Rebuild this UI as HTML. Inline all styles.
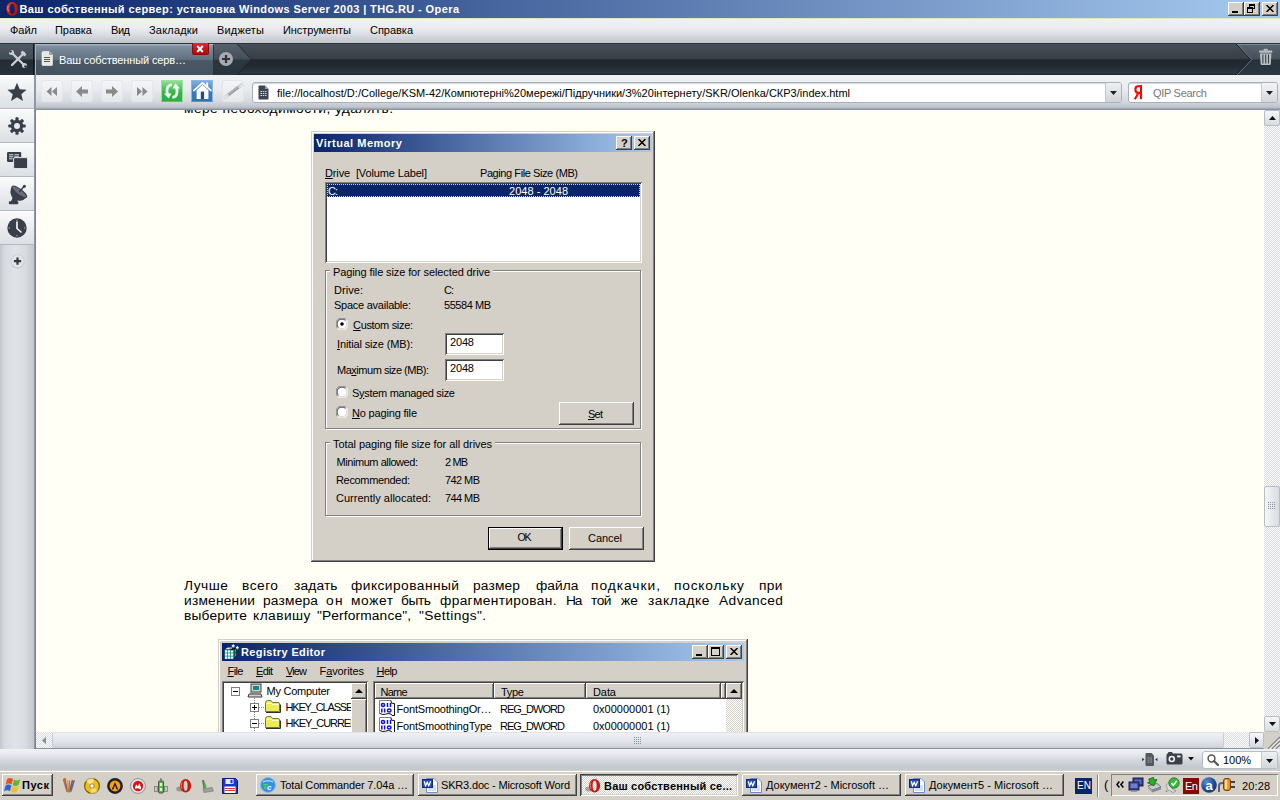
<!DOCTYPE html>
<html><head><meta charset="utf-8"><title>Opera</title><style>
html,body{margin:0;padding:0;}
body{width:1280px;height:800px;overflow:hidden;position:relative;background:#d4d0c8;font-family:"Liberation Sans", sans-serif;font-size:11px;}
div,span.t,svg{position:absolute;box-sizing:border-box;}
span.t{white-space:pre;}
</style></head><body>
<div style="left:0px;top:0px;width:1280px;height:18px;background:linear-gradient(90deg,#0a246a 0%,#a6caf0 100%);"></div>
<svg style="left:4px;top:1px;" width="16" height="16" viewBox="0 0 16 16"><defs><linearGradient id="og" x1="0" y1="0" x2="1" y2="1"><stop offset="0" stop-color="#f05040"/><stop offset=".35" stop-color="#d41c14"/><stop offset="1" stop-color="#a80c08"/></linearGradient></defs><ellipse cx="3.6" cy="10.6" rx="3" ry="2" fill="#081848" opacity=".45"/><path fill-rule="evenodd" fill="url(#og)" d="M2.3 7.9 A5.9 6.8 0 1 0 14.1 7.9 A5.9 6.8 0 1 0 2.3 7.9 Z M6 7.9 A2.3 5.2 0 1 1 10.6 7.9 A2.3 5.2 0 1 1 6 7.9 Z"/><path d="M4.2 4.6 Q3.2 7.5 4.4 10.6" stroke="#ffb0a0" stroke-width=".9" fill="none" opacity=".8"/></svg>
<span class="t" style="left:19.5px;top:2px;font-size:11px;line-height:14px;font-weight:bold;color:#fff;letter-spacing:0.401px;">Ваш собственный сервер: установка Windows Server 2003 | THG.RU - Opera</span>
<div style="left:1228px;top:2px;width:16px;height:14px;background:#d4d0c8;box-shadow:inset -1px -1px 0 #404040,inset 1px 1px 0 #fff,inset -2px -2px 0 #808080,inset 2px 2px 0 #d4d0c8;"><div style="left:4px;top:9px;width:6px;height:2px;background:#000"></div></div>
<div style="left:1244px;top:2px;width:16px;height:14px;background:#d4d0c8;box-shadow:inset -1px -1px 0 #404040,inset 1px 1px 0 #fff,inset -2px -2px 0 #808080,inset 2px 2px 0 #d4d0c8;"><div style="left:5px;top:2px;width:6px;height:5px;border:1px solid #000;border-top-width:2px"></div><div style="left:3px;top:5px;width:6px;height:6px;border:1px solid #000;border-top-width:2px;background:#d4d0c8"></div></div>
<div style="left:1262px;top:2px;width:16px;height:14px;background:#d4d0c8;box-shadow:inset -1px -1px 0 #404040,inset 1px 1px 0 #fff,inset -2px -2px 0 #808080,inset 2px 2px 0 #d4d0c8;"></div>
<svg style="left:1266px;top:5px;" width="8" height="7" viewBox="0 0 8 7"><path d="M.5 0L7.5 7M7.5 0L.5 7" stroke="#000" stroke-width="1.5"/></svg>
<div style="left:0px;top:18px;width:1280px;height:25px;background:linear-gradient(#f0f1f3 0,#ecedf0 35%,#dadde2 65%,#c8ccd3 88%,#c2c6ce 100%);border-top:1px solid #e8e0d0;"></div>
<span class="t" style="left:10px;top:23px;font-size:11px;line-height:14px;color:#000;letter-spacing:-0.016px;">Файл</span>
<span class="t" style="left:55px;top:23px;font-size:11px;line-height:14px;color:#000;letter-spacing:-0.034px;">Правка</span>
<span class="t" style="left:111px;top:23px;font-size:11px;line-height:14px;color:#000;letter-spacing:-0.453px;">Вид</span>
<span class="t" style="left:149px;top:23px;font-size:11px;line-height:14px;color:#000;letter-spacing:0.199px;">Закладки</span>
<span class="t" style="left:217px;top:23px;font-size:11px;line-height:14px;color:#000;letter-spacing:0.172px;">Виджеты</span>
<span class="t" style="left:283px;top:23px;font-size:11px;line-height:14px;color:#000;letter-spacing:-0.059px;">Инструменты</span>
<span class="t" style="left:370px;top:23px;font-size:11px;line-height:14px;color:#000;letter-spacing:-0.026px;">Справка</span>
<div style="left:0px;top:43px;width:1280px;height:32px;background:linear-gradient(#464e58 0,#373f49 46%,#1f262d 52%,#222a31 70%,#2d3840 96%,#161c20 100%);border-top:1px solid #2e343c;"></div>
<div style="left:0px;top:44px;width:34px;height:31px;background:linear-gradient(#505a64 0,#424c56 47%,#242d35 53%,#28313a 100%);border-right:1px solid #11161a;"></div>
<svg style="left:8px;top:49px;" width="20" height="20" viewBox="0 0 20 20"><g stroke="#ccd0d4" stroke-width="2.3" stroke-linecap="round"><path d="M4 4 L16 16"/><path d="M16 4 L4 16"/></g><circle cx="3.5" cy="3.5" r="2.5" fill="#ccd0d4"/><circle cx="16.5" cy="16.5" r="2.5" fill="#ccd0d4"/><circle cx="2.5" cy="2.5" r="1.3" fill="#3a444e"/><circle cx="17.5" cy="17.5" r="1.3" fill="#2a333b"/><path d="M14.5 1.5 L18.5 5.5 L16.5 7.5 L12.5 3.5 Z" fill="#ccd0d4"/></svg>
<div style="left:35px;top:44px;width:179px;height:31px;background:linear-gradient(#8e9dad 0,#7a8a9b 10%,#62717f 48%,#4a5966 52%,#43525e 100%);border-left:1px solid #a4b0bc;border-right:1px solid #2a333b;border-top:1px solid #a8b4c0;"></div>
<svg style="left:41px;top:51px;" width="12" height="15" viewBox="0 0 12 15"><path d="M1 1.5 Q1 .5 2 .5 L8 .5 L11.5 4 L11.5 13.5 Q11.5 14.5 10.5 14.5 L2 14.5 Q1 14.5 1 13.5 Z" fill="#e8e8e4" stroke="#f8f8f8" stroke-width=".6"/><path d="M8 .5 L8 4 L11.5 4 Z" fill="#a0a4a0"/><path d="M3 6.5H9M3 8.5H9M3 10.5H9" stroke="#555" stroke-width="1"/></svg>
<span class="t" style="left:59px;top:53px;font-size:11px;line-height:14px;color:#fff;letter-spacing:-0.123px;">Ваш собственный серв…</span>
<div style="left:192px;top:43px;width:17px;height:12px;background:linear-gradient(#e42828,#b00808);border:1px solid #8c0c0c;border-top:0;border-radius:0 0 2px 2px;"></div>
<svg style="left:196px;top:45px;" width="8" height="8" viewBox="0 0 8 8"><path d="M1.2 1L6.8 7M6.8 1L1.2 7" stroke="#fff" stroke-width="2"/></svg>
<svg style="left:214px;top:44px;" width="40" height="31" viewBox="0 0 40 31"><defs><linearGradient id="nt" x1="0" y1="0" x2="0" y2="1"><stop offset="0" stop-color="#58626c"/><stop offset=".48" stop-color="#444e58"/><stop offset=".52" stop-color="#2c363e"/><stop offset="1" stop-color="#2a343c"/></linearGradient></defs><path d="M0 0 L23 0 L37.5 15.5 L23 31 L0 31 Z" fill="url(#nt)"/><path d="M23 0 L37.5 15.5 L23 31" fill="none" stroke="#161c21" stroke-width="1" opacity=".7"/><circle cx="12" cy="15" r="7" fill="#a6aaae"/><path d="M12 11V19M8 15H16" stroke="#2c343a" stroke-width="2.2"/></svg>
<svg style="left:1234px;top:44px;" width="46" height="31" viewBox="0 0 46 31"><defs><linearGradient id="tr" x1="0" y1="0" x2="0" y2="1"><stop offset="0" stop-color="#586470"/><stop offset=".48" stop-color="#44505c"/><stop offset=".52" stop-color="#28323a"/><stop offset="1" stop-color="#2c3640"/></linearGradient></defs><path d="M3 0 L46 0 L46 31 L3 31 L17.8 15.5 Z" fill="url(#tr)"/><path d="M2 0 L16.8 15.5 L2 31" fill="none" stroke="#14191d" stroke-width="1"/><path d="M3 0 L17.8 15.5 L3 31" fill="none" stroke="#6a7682" stroke-width="1"/><path d="M3 .5 H46" stroke="#7c8894" stroke-width="1"/><g fill="#babec2"><rect x="25" y="6.6" width="13.4" height="2.2" rx="1"/><rect x="29.6" y="4.8" width="4.2" height="2" rx=".8"/><path d="M26 9.4 H37.4 L36.8 20 Q36.7 21 35.7 21 H27.7 Q26.7 21 26.6 20 Z"/></g><path d="M28.9 10.6V19.4M31.7 10.6V19.4M34.5 10.6V19.4" stroke="#3a444c" stroke-width="1.1"/></svg>
<div style="left:34px;top:75px;width:1246px;height:35px;background:linear-gradient(#f1f2f4 0,#e9ebee 40%,#d6d9df 75%,#bec4cc 92%,#7e8894 100%);border-left:2px solid #8e98a4;"></div>
<div style="left:41px;top:80px;width:22px;height:22px;background:linear-gradient(#f4f5f7,#e6e8ec);border:1px solid #e4e6ea;border-radius:3px;"></div>
<div style="left:71px;top:80px;width:22px;height:22px;background:linear-gradient(#f4f5f7,#e6e8ec);border:1px solid #e4e6ea;border-radius:3px;"></div>
<div style="left:101px;top:80px;width:22px;height:22px;background:linear-gradient(#f4f5f7,#e6e8ec);border:1px solid #e4e6ea;border-radius:3px;"></div>
<div style="left:131px;top:80px;width:22px;height:22px;background:linear-gradient(#f4f5f7,#e6e8ec);border:1px solid #e4e6ea;border-radius:3px;"></div>
<svg style="left:41px;top:80px;" width="22" height="23" viewBox="0 0 22 23"><path d="M10.5 7 L10.5 16 L5.5 11.5 Z M16 7 L16 16 L11 11.5 Z" fill="#8a8a8a"/></svg>
<svg style="left:71px;top:80px;" width="22" height="23" viewBox="0 0 22 23"><path d="M11 6 L11 9.5 L17 9.5 L17 13.5 L11 13.5 L11 17 L5 11.5 Z" fill="#8a8a8a"/></svg>
<svg style="left:101px;top:80px;" width="22" height="23" viewBox="0 0 22 23"><path d="M11 6 L11 9.5 L5 9.5 L5 13.5 L11 13.5 L11 17 L17 11.5 Z" fill="#8a8a8a"/></svg>
<svg style="left:131px;top:80px;" width="22" height="23" viewBox="0 0 22 23"><path d="M6 7 L6 16 L11 11.5 Z M11.5 7 L11.5 16 L16.5 11.5 Z" fill="#8a8a8a"/></svg>
<div style="left:161px;top:80px;width:22px;height:22px;background:linear-gradient(#92de98 0,#5cc86a 30%,#38b048 60%,#30ac42 100%);border:1px solid #9ce0a0;border-bottom-color:#58c066;"></div>
<svg style="left:161px;top:80px;" width="22" height="22" viewBox="0 0 22 22"><g fill="none" stroke="#f4fff4" stroke-width="2.8" opacity=".95"><path d="M10.8 4.6 Q4.2 6 6.6 14.6"/><path d="M11.4 17.6 Q18 16 15.4 7.4"/></g><path d="M3 13.6 L10.6 13.6 L7.6 18.6 Z" fill="#f4fff4"/><path d="M11.4 8.4 L19 8.4 L14.4 3.2 Z" fill="#f4fff4"/></svg>
<div style="left:191px;top:80px;width:22px;height:22px;background:linear-gradient(#82acde 0,#5c90d0 35%,#3a76c2 60%,#3470bc 100%);border:1px solid #8cb4e2;border-bottom-color:#5c8ccc;"></div>
<svg style="left:191px;top:80px;" width="22" height="22" viewBox="0 0 22 22"><path d="M5.6 10.2 L11.5 5 L17.4 10.2 L17.4 19 L5.6 19 Z" fill="#fff"/><path d="M2.4 10.8 L11.5 2.8 L20.4 10.8" fill="none" stroke="#fff" stroke-width="1.7"/><rect x="15.2" y="2.6" width="1.9" height="5" fill="#fff"/><rect x="9.8" y="11.6" width="3.3" height="7.4" fill="#2444a4"/></svg>
<div style="left:222px;top:80px;width:22px;height:22px;background:linear-gradient(#f4f5f7,#e6e8ec);border:1px solid #e4e6ea;border-radius:3px;"></div>
<svg style="left:221px;top:80px;" width="23" height="23" viewBox="0 0 23 23"><path d="M4.2 17.2 L20.6 4.8" stroke="#9a9ea4" stroke-width="3" stroke-linecap="round"/><path d="M4.2 17.2 L6.4 15.5 M18.6 6.3 L20.6 4.8" stroke="#e4e6e8" stroke-width="3" stroke-linecap="round"/><path d="M5 16 L20 4.6" stroke="#c4c8cc" stroke-width=".8"/></svg>
<div style="left:252px;top:82px;width:870px;height:21px;background:#fff;border:1px solid #a8b0ba;border-radius:3px;box-shadow:inset 0 1px 1px #d0d4d8;"></div>
<svg style="left:258px;top:85px;" width="11" height="15" viewBox="0 0 11 15"><path d="M.5 1.5 Q.5 .5 1.5 .5 L7 .5 L10.5 4 L10.5 13.5 Q10.5 14.5 9.5 14.5 L1.5 14.5 Q.5 14.5 .5 13.5 Z" fill="#3e4652"/><path d="M7 .5 L7 4 L10.5 4 Z" fill="#999"/><path d="M2.5 6.5H8.5M2.5 8.5H8.5M2.5 10.5H8.5" stroke="#ddd" stroke-width="1" stroke-dasharray="1.5 .8"/></svg>
<span class="t" style="left:277px;top:86px;font-size:11px;line-height:14px;color:#000;letter-spacing:0.01px;">file://localhost/D:/College/KSM-42/Компютерні%20мережі/Підручники/З%20інтернету/SKR/Olenka/СКР3/index.html</span>
<div style="left:1105px;top:83px;width:16px;height:19px;background:linear-gradient(#eef0f2,#d0d4d9);border-left:1px solid #c4c9ce;border-radius:0 2px 2px 0;"></div>
<svg style="left:1110px;top:91px;" width="7" height="4" viewBox="0 0 7 4"><path d="M0 0 H7 L3.5 4 Z" fill="#222"/></svg>
<div style="left:1128px;top:82px;width:150px;height:21px;background:#fff;border:1px solid #a8b0ba;border-radius:3px;box-shadow:inset 0 1px 1px #d0d4d8;"></div>
<svg style="left:1133px;top:85px;" width="10" height="15" viewBox="0 0 10 15"><g fill="none" stroke="#f00" stroke-width="2.1"><path d="M8 0 V14.2"/><path d="M8 1.2 H5.2 Q2.4 1.2 2.4 4.4 Q2.4 7.8 5.2 7.8 H8"/><path d="M5.6 7.8 L1.8 14.2"/></g></svg>
<span class="t" style="left:1153px;top:86px;font-size:11px;line-height:14px;color:#777;letter-spacing:-0.297px;">QIP Search</span>
<div style="left:1261px;top:83px;width:16px;height:19px;background:linear-gradient(#f4f5f6,#d4d8dc);border-left:1px solid #c8ccd0;border-radius:0 2px 2px 0;"></div>
<svg style="left:1266px;top:91px;" width="7" height="4" viewBox="0 0 7 4"><path d="M0 0 H7 L3.5 4 Z" fill="#222"/></svg>
<div style="left:0px;top:75px;width:34px;height:674px;background:linear-gradient(90deg,#c2c6ce 0,#d6d9de 12%,#e0e3e7 45%,#d8dbe0 75%,#c2c8d0 100%);"></div>
<div style="left:0px;top:75px;width:34px;height:34px;background:linear-gradient(#fafafb 0,#eceef1 45%,#dcdfe4 100%);border-bottom:1px solid #b4bac4;border-top:1px solid #fff;"></div>
<div style="left:0px;top:109px;width:34px;height:34px;background:linear-gradient(#fafafb 0,#eceef1 45%,#dcdfe4 100%);border-bottom:1px solid #b4bac4;border-top:1px solid #fff;"></div>
<div style="left:0px;top:143px;width:34px;height:34px;background:linear-gradient(#fafafb 0,#eceef1 45%,#dcdfe4 100%);border-bottom:1px solid #b4bac4;border-top:1px solid #fff;"></div>
<div style="left:0px;top:177px;width:34px;height:34px;background:linear-gradient(#fafafb 0,#eceef1 45%,#dcdfe4 100%);border-bottom:1px solid #b4bac4;border-top:1px solid #fff;"></div>
<div style="left:0px;top:211px;width:34px;height:34px;background:linear-gradient(#fafafb 0,#eceef1 45%,#dcdfe4 100%);border-bottom:1px solid #b4bac4;border-top:1px solid #fff;"></div>
<svg style="left:7px;top:82px;" width="20" height="20" viewBox="0 0 20 20"><path d="M10 .8 L12.7 7.2 L19.6 7.7 L14.3 12.2 L16 19 L10 15.3 L4 19 L5.7 12.2 L.4 7.7 L7.3 7.2 Z" fill="#3a3e48"/></svg>
<svg style="left:8px;top:117px;" width="18" height="18" viewBox="0 0 18 18"><rect x="7.4" y="0.3" width="3.2" height="17.4" rx=".8" transform="rotate(0 9 9)" fill="#3a3e48"/><rect x="7.4" y="0.3" width="3.2" height="17.4" rx=".8" transform="rotate(45 9 9)" fill="#3a3e48"/><rect x="7.4" y="0.3" width="3.2" height="17.4" rx=".8" transform="rotate(90 9 9)" fill="#3a3e48"/><rect x="7.4" y="0.3" width="3.2" height="17.4" rx=".8" transform="rotate(135 9 9)" fill="#3a3e48"/><circle cx="9" cy="9" r="6.2" fill="#3a3e48"/><circle cx="9" cy="9" r="3" fill="#e8eaee"/></svg>
<svg style="left:6px;top:151px;" width="22" height="18" viewBox="0 0 22 18"><rect x="1" y="1" width="14.2" height="10" rx="1.2" fill="#3a3e48"/><rect x="7.6" y="6.6" width="14" height="11" rx="1.4" fill="#3a3e48" stroke="#e4e6ea" stroke-width="1"/><path d="M3 3.8H7.4M8.4 3.8H13M3 5.8H7.4M8.4 5.8H13M3 7.8H6.6" stroke="#dcdee2" stroke-width="1"/></svg>
<svg style="left:7px;top:183px;" width="21" height="22" viewBox="0 0 21 22"><path d="M5.2 3.6 A8.8 8.8 0 0 0 19.4 14.2 Z" fill="#3a3e48"/><ellipse cx="12.3" cy="8.9" rx="8.9" ry="2.7" transform="rotate(36.7 12.3 8.9)" fill="#6a6e78" stroke="#3a3e48" stroke-width="1"/><path d="M12.3 8.9 L17 3.6" stroke="#3a3e48" stroke-width="1.5"/><circle cx="17.4" cy="3.2" r="1.5" fill="#3a3e48"/><path d="M6.6 12.5 L3.8 19 L10 19 L11 16.4 Z" fill="#3a3e48"/><rect x="1.8" y="18.2" width="9.6" height="3" rx="1.2" fill="#3a3e48"/></svg>
<svg style="left:7px;top:218px;" width="20" height="20" viewBox="0 0 20 20"><circle cx="10" cy="10" r="9.7" fill="#3a3e48"/><path d="M10 4 L10 10.5 L14 14" fill="none" stroke="#fff" stroke-width="1.6" stroke-linecap="round"/><g fill="#aab"><circle cx="10" cy="2.2" r=".7"/><circle cx="10" cy="17.8" r=".7"/><circle cx="2.2" cy="10" r=".7"/><circle cx="17.8" cy="10" r=".7"/></g></svg>
<svg style="left:10px;top:254px;" width="15" height="15" viewBox="0 0 15 15"><circle cx="7.5" cy="7.8" r="6.8" fill="#b4b8c0"/><circle cx="7.5" cy="7.2" r="6.6" fill="#e2e4e8" stroke="#c8ccd2" stroke-width=".8"/><path d="M7.5 3.6V10.8M3.9 7.2H11.1" stroke="#34383f" stroke-width="2.2"/></svg>
<div style="left:34px;top:110px;width:2px;height:639px;background:linear-gradient(90deg,#98a2ae,#6e7a88);"></div>
<div style="left:36px;top:110px;width:1228px;height:622px;background:#fffff6;overflow:hidden;"></div>
<div style="left:36px;top:110px;width:1229px;height:8px;overflow:hidden;">
<span class="t" style="left:147.5px;top:-8px;font-size:12.5px;line-height:15px;color:#000;letter-spacing:0.413px;transform:scaleX(1.1);transform-origin:0 0;">мере необходимости, удалять.</span>
</div>
<div style="left:311px;top:131px;width:344px;height:431px;background:#d4d0c8;box-shadow:inset -1px -1px 0 #404040,inset 1px 1px 0 #d4d0c8,inset -2px -2px 0 #808080,inset 2px 2px 0 #fff;"></div>
<div style="left:314px;top:134px;width:338px;height:18px;background:linear-gradient(90deg,#0a246a 0%,#a6caf0 100%);"></div>
<span class="t" style="left:316px;top:136px;font-size:11px;line-height:14px;font-weight:bold;color:#fff;letter-spacing:0.517px;">Virtual Memory</span>
<div style="left:616px;top:136px;width:16px;height:14px;background:#d4d0c8;box-shadow:inset -1px -1px 0 #404040,inset 1px 1px 0 #fff,inset -2px -2px 0 #808080,inset 2px 2px 0 #d4d0c8;"></div>
<span class="t" style="left:621px;top:136px;font-size:11px;line-height:14px;font-weight:bold;color:#000;">?</span>
<div style="left:634px;top:136px;width:16px;height:14px;background:#d4d0c8;box-shadow:inset -1px -1px 0 #404040,inset 1px 1px 0 #fff,inset -2px -2px 0 #808080,inset 2px 2px 0 #d4d0c8;"></div>
<svg style="left:638px;top:139px;" width="8" height="7" viewBox="0 0 8 7"><path d="M.5 0L7.5 7M7.5 0L.5 7" stroke="#000" stroke-width="1.5"/></svg>
<span class="t" style="left:325px;top:166px;font-size:11px;line-height:14px;color:#000;letter-spacing:-0.129px;"><u>D</u>rive  [Volume Label]</span>
<span class="t" style="left:480px;top:166px;font-size:11px;line-height:14px;color:#000;letter-spacing:-0.419px;">Paging File Size (MB)</span>
<div style="left:325px;top:182px;width:317px;height:81px;background:#fff;box-shadow:inset 1px 1px 0 #808080,inset -1px -1px 0 #fff,inset 2px 2px 0 #404040,inset -2px -2px 0 #d4d0c8;"></div>
<div style="left:327px;top:184px;width:313px;height:13px;background:#0a246a;outline:1px dotted #e8d8a0;outline-offset:-1px;"></div>
<span class="t" style="left:328px;top:184px;font-size:11px;line-height:14px;color:#fff;letter-spacing:-1px;">C:</span>
<span class="t" style="left:509px;top:184px;font-size:11px;line-height:14px;color:#fff;letter-spacing:0.028px;">2048 - 2048</span>
<div style="left:325px;top:270px;width:316px;height:159px;border:1px solid #808080;box-shadow:inset 1px 1px 0 #fff,1px 1px 0 #fff;"></div>
<div style="left:330px;top:268px;width:163px;height:6px;background:#d4d0c8;"></div>
<span class="t" style="left:333px;top:265px;font-size:11px;line-height:14px;color:#000;letter-spacing:-0.112px;">Paging file size for selected drive</span>
<span class="t" style="left:334px;top:283px;font-size:11px;line-height:14px;color:#000;letter-spacing:0.053px;">Drive:</span>
<span class="t" style="left:444px;top:283px;font-size:11px;line-height:14px;color:#000;letter-spacing:-1px;">C:</span>
<span class="t" style="left:334px;top:298px;font-size:11px;line-height:14px;color:#000;letter-spacing:-0.249px;">Space available:</span>
<span class="t" style="left:444px;top:298px;font-size:11px;line-height:14px;color:#000;letter-spacing:-0.451px;">55584 MB</span>
<svg style="left:336px;top:318px;" width="12" height="12" viewBox="0 0 12 12"><circle cx="6" cy="6" r="5.5" fill="#fff"/><path d="M1.6 10.4 A6 6 0 0 1 10.4 1.6" fill="none" stroke="#808080" stroke-width="1"/><path d="M2.5 9.5 A4.8 4.8 0 0 1 9.5 2.5" fill="none" stroke="#404040" stroke-width="1"/><path d="M10.4 1.6 A6 6 0 0 1 1.6 10.4" fill="none" stroke="#fff" stroke-width="1"/><path d="M9.5 2.5 A4.8 4.8 0 0 1 2.5 9.5" fill="none" stroke="#d4d0c8" stroke-width="1"/><circle cx="6" cy="6" r="1.8" fill="#000"/></svg>
<span class="t" style="left:353px;top:318px;font-size:11px;line-height:14px;color:#000;letter-spacing:-0.327px;"><u>C</u>ustom size:</span>
<span class="t" style="left:337px;top:337px;font-size:11px;line-height:14px;color:#000;letter-spacing:-0.132px;"><u>I</u>nitial size (MB):</span>
<div style="left:445px;top:333px;width:59px;height:22px;background:#fff;box-shadow:inset 1px 1px 0 #808080,inset -1px -1px 0 #fff,inset 2px 2px 0 #404040,inset -2px -2px 0 #d4d0c8;"></div>
<span class="t" style="left:450px;top:335px;font-size:11px;line-height:14px;color:#000;letter-spacing:-0.161px;">2048</span>
<span class="t" style="left:337px;top:363px;font-size:11px;line-height:14px;color:#000;letter-spacing:-0.484px;">Ma<u>x</u>imum size (MB):</span>
<div style="left:445px;top:359px;width:59px;height:22px;background:#fff;box-shadow:inset 1px 1px 0 #808080,inset -1px -1px 0 #fff,inset 2px 2px 0 #404040,inset -2px -2px 0 #d4d0c8;"></div>
<span class="t" style="left:450px;top:361px;font-size:11px;line-height:14px;color:#000;letter-spacing:-0.161px;">2048</span>
<svg style="left:336px;top:386px;" width="12" height="12" viewBox="0 0 12 12"><circle cx="6" cy="6" r="5.5" fill="#fff"/><path d="M1.6 10.4 A6 6 0 0 1 10.4 1.6" fill="none" stroke="#808080" stroke-width="1"/><path d="M2.5 9.5 A4.8 4.8 0 0 1 9.5 2.5" fill="none" stroke="#404040" stroke-width="1"/><path d="M10.4 1.6 A6 6 0 0 1 1.6 10.4" fill="none" stroke="#fff" stroke-width="1"/><path d="M9.5 2.5 A4.8 4.8 0 0 1 2.5 9.5" fill="none" stroke="#d4d0c8" stroke-width="1"/></svg>
<span class="t" style="left:352px;top:386px;font-size:11px;line-height:14px;color:#000;letter-spacing:-0.291px;">S<u>y</u>stem managed size</span>
<svg style="left:336px;top:406px;" width="12" height="12" viewBox="0 0 12 12"><circle cx="6" cy="6" r="5.5" fill="#fff"/><path d="M1.6 10.4 A6 6 0 0 1 10.4 1.6" fill="none" stroke="#808080" stroke-width="1"/><path d="M2.5 9.5 A4.8 4.8 0 0 1 9.5 2.5" fill="none" stroke="#404040" stroke-width="1"/><path d="M10.4 1.6 A6 6 0 0 1 1.6 10.4" fill="none" stroke="#fff" stroke-width="1"/><path d="M9.5 2.5 A4.8 4.8 0 0 1 2.5 9.5" fill="none" stroke="#d4d0c8" stroke-width="1"/></svg>
<span class="t" style="left:352px;top:406px;font-size:11px;line-height:14px;color:#000;letter-spacing:-0.175px;"><u>N</u>o paging file</span>
<div style="left:559px;top:402px;width:75px;height:23px;background:#d4d0c8;box-shadow:inset -1px -1px 0 #404040,inset 1px 1px 0 #fff,inset -2px -2px 0 #808080,inset 2px 2px 0 #d4d0c8;"></div>
<span class="t" style="left:588px;top:407px;font-size:11px;line-height:14px;color:#000;letter-spacing:-0.766px;"><u>S</u>et</span>
<div style="left:325px;top:442px;width:316px;height:74px;border:1px solid #808080;box-shadow:inset 1px 1px 0 #fff,1px 1px 0 #fff;"></div>
<div style="left:330px;top:440px;width:165px;height:6px;background:#d4d0c8;"></div>
<span class="t" style="left:333px;top:437px;font-size:11px;line-height:14px;color:#000;letter-spacing:-0.067px;">Total paging file size for all drives</span>
<span class="t" style="left:336.5px;top:455px;font-size:11px;line-height:14px;color:#000;letter-spacing:-0.435px;">Minimum allowed:</span>
<span class="t" style="left:445px;top:455px;font-size:11px;line-height:14px;color:#000;letter-spacing:-0.896px;">2 MB</span>
<span class="t" style="left:336px;top:473px;font-size:11px;line-height:14px;color:#000;letter-spacing:-0.332px;">Recommended:</span>
<span class="t" style="left:445px;top:473px;font-size:11px;line-height:14px;color:#000;letter-spacing:-0.584px;">742 MB</span>
<span class="t" style="left:336px;top:491px;font-size:11px;line-height:14px;color:#000;letter-spacing:0.012px;">Currently allocated:</span>
<span class="t" style="left:445px;top:491px;font-size:11px;line-height:14px;color:#000;letter-spacing:-0.584px;">744 MB</span>
<div style="left:488px;top:527px;width:75px;height:23px;background:#000;"></div>
<div style="left:489px;top:528px;width:73px;height:21px;background:#d4d0c8;box-shadow:inset -1px -1px 0 #404040,inset 1px 1px 0 #fff,inset -2px -2px 0 #808080,inset 2px 2px 0 #d4d0c8;"></div>
<span class="t" style="left:517.5px;top:531px;font-size:10.5px;line-height:13.5px;color:#000;letter-spacing:-1.172px;">OK</span>
<div style="left:569px;top:527px;width:75px;height:23px;background:#d4d0c8;box-shadow:inset -1px -1px 0 #404040,inset 1px 1px 0 #fff,inset -2px -2px 0 #808080,inset 2px 2px 0 #d4d0c8;"></div>
<span class="t" style="left:588px;top:531px;font-size:11px;line-height:14px;color:#000;letter-spacing:-0.05px;">Cancel</span>
<span class="t" style="left:183.5px;top:579px;font-size:12.5px;line-height:15px;color:#000;letter-spacing:0.477px;transform:scaleX(1.1);transform-origin:0 0;">Лучше</span>
<span class="t" style="left:242px;top:579px;font-size:12.5px;line-height:15px;color:#000;letter-spacing:0.444px;transform:scaleX(1.1);transform-origin:0 0;">всего</span>
<span class="t" style="left:293.5px;top:579px;font-size:12.5px;line-height:15px;color:#000;letter-spacing:0.128px;transform:scaleX(1.1);transform-origin:0 0;">задать</span>
<span class="t" style="left:351px;top:579px;font-size:12.5px;line-height:15px;color:#000;letter-spacing:0.411px;transform:scaleX(1.1);transform-origin:0 0;">фиксированный</span>
<span class="t" style="left:473px;top:579px;font-size:12.5px;line-height:15px;color:#000;letter-spacing:0.145px;transform:scaleX(1.1);transform-origin:0 0;">размер</span>
<span class="t" style="left:535.5px;top:579px;font-size:12.5px;line-height:15px;color:#000;letter-spacing:0.042px;transform:scaleX(1.1);transform-origin:0 0;">файла</span>
<span class="t" style="left:591px;top:579px;font-size:12.5px;line-height:15px;color:#000;letter-spacing:0.89px;transform:scaleX(1.1);transform-origin:0 0;">подкачки,</span>
<span class="t" style="left:674px;top:579px;font-size:12.5px;line-height:15px;color:#000;letter-spacing:0.712px;transform:scaleX(1.1);transform-origin:0 0;">поскольку</span>
<span class="t" style="left:759px;top:579px;font-size:12.5px;line-height:15px;color:#000;letter-spacing:0.33px;transform:scaleX(1.1);transform-origin:0 0;">при</span>
<span class="t" style="left:183.5px;top:594px;font-size:12.5px;line-height:15px;color:#000;letter-spacing:0.195px;transform:scaleX(1.1);transform-origin:0 0;">изменении</span>
<span class="t" style="left:262.5px;top:594px;font-size:12.5px;line-height:15px;color:#000;letter-spacing:0.174px;transform:scaleX(1.1);transform-origin:0 0;">размера</span>
<span class="t" style="left:326px;top:594px;font-size:12.5px;line-height:15px;color:#000;letter-spacing:1.141px;transform:scaleX(1.1);transform-origin:0 0;">он</span>
<span class="t" style="left:350.5px;top:594px;font-size:12.5px;line-height:15px;color:#000;letter-spacing:0.538px;transform:scaleX(1.1);transform-origin:0 0;">может</span>
<span class="t" style="left:400.5px;top:594px;font-size:12.5px;line-height:15px;color:#000;letter-spacing:-0.373px;transform:scaleX(1.1);transform-origin:0 0;">быть</span>
<span class="t" style="left:439.5px;top:594px;font-size:12.5px;line-height:15px;color:#000;letter-spacing:0.305px;transform:scaleX(1.1);transform-origin:0 0;">фрагментирован.</span>
<span class="t" style="left:565.5px;top:594px;font-size:12.5px;line-height:15px;color:#000;letter-spacing:-0.984px;transform:scaleX(1.1);transform-origin:0 0;">На</span>
<span class="t" style="left:590.5px;top:594px;font-size:12.5px;line-height:15px;color:#000;letter-spacing:-0.447px;transform:scaleX(1.1);transform-origin:0 0;">той</span>
<span class="t" style="left:621px;top:594px;font-size:12.5px;line-height:15px;color:#000;letter-spacing:0.126px;transform:scaleX(1.1);transform-origin:0 0;">же</span>
<span class="t" style="left:647.5px;top:594px;font-size:12.5px;line-height:15px;color:#000;letter-spacing:0.5px;transform:scaleX(1.1);transform-origin:0 0;">закладке</span>
<span class="t" style="left:718.5px;top:594px;font-size:12.5px;line-height:15px;color:#000;letter-spacing:0.367px;transform:scaleX(1.1);transform-origin:0 0;">Advanced</span>
<span class="t" style="left:183.5px;top:609px;font-size:12.5px;line-height:15px;color:#000;letter-spacing:0.171px;transform:scaleX(1.1);transform-origin:0 0;">выберите</span>
<span class="t" style="left:252.5px;top:609px;font-size:12.5px;line-height:15px;color:#000;letter-spacing:0.418px;transform:scaleX(1.1);transform-origin:0 0;">клавишу</span>
<span class="t" style="left:317px;top:609px;font-size:12.5px;line-height:15px;color:#000;letter-spacing:0.119px;transform:scaleX(1.1);transform-origin:0 0;">"Performance",</span>
<span class="t" style="left:419px;top:609px;font-size:12.5px;line-height:15px;color:#000;letter-spacing:0.339px;transform:scaleX(1.1);transform-origin:0 0;">"Settings".</span>
<div style="left:218px;top:638px;width:531px;height:94px;overflow:hidden;">
<div style="left:0px;top:1px;width:530px;height:140px;background:#d4d0c8;box-shadow:inset -1px -1px 0 #404040,inset 1px 1px 0 #d4d0c8,inset -2px -2px 0 #808080,inset 2px 2px 0 #fff;"></div>
<div style="left:4px;top:5px;width:522px;height:18px;background:linear-gradient(90deg,#0a246a 0%,#a6caf0 100%);"></div>
<svg style="left:6px;top:6px;" width="16" height="16" viewBox="0 0 16 16"><path d="M.5 5.5 L3.5 3.2 L13 3.2 L13 12.6 L10 15.5 L.5 15.5 Z" fill="#0c1010"/><rect x=".5" y="5.6" width="9.4" height="9.6" fill="#1c9c98"/><rect x="1" y="6.4" width="2.1" height="2.1" fill="#fff"/><rect x="1" y="9.5" width="2.1" height="2.1" fill="#fff"/><rect x="1" y="12.600000000000001" width="2.1" height="2.1" fill="#fff"/><rect x="4" y="6.4" width="2.1" height="2.1" fill="#fff"/><rect x="4" y="9.5" width="2.1" height="2.1" fill="#fff"/><rect x="4" y="12.600000000000001" width="2.1" height="2.1" fill="#fff"/><rect x="7" y="6.4" width="2.1" height="2.1" fill="#fff"/><rect x="7" y="9.5" width="2.1" height="2.1" fill="#fff"/><rect x="7" y="12.600000000000001" width="2.1" height="2.1" fill="#fff"/><path d="M10.2 5.8 L12.6 3.8 L12.6 12.2 L10.2 14.6 Z" fill="#0c5c5c"/><path d="M11.4 5.6 V8 M11.4 9.4 V11.8" stroke="#28b8b0" stroke-width="1"/><path d="M1 5.2 L3.6 3.4 L9 3.4 L7 5.2 Z" fill="#e8f4f4"/><path d="M5 4.4 L8 6.5 L9.6 5 Z" fill="#0c1010"/><path d="M9.2 .2 L11 1.8 L9.2 3.6 L7.4 1.8 Z" fill="#f4ffff"/><path d="M9.2 3.6 L11 1.8 L11 3 L9.6 4.4 Z" fill="#189894"/><path d="M13.2 2 L15 3.6 L13.2 5.2 L11.6 3.6 Z" fill="#f4ffff"/><path d="M13.2 5.2 L15 3.6 L15 4.6 L13.6 6 Z" fill="#189894"/></svg>
<span class="t" style="left:23px;top:7px;font-size:11px;line-height:14px;font-weight:bold;color:#fff;letter-spacing:0.367px;">Registry Editor</span>
<div style="left:474px;top:7px;width:16px;height:14px;background:#d4d0c8;box-shadow:inset -1px -1px 0 #404040,inset 1px 1px 0 #fff,inset -2px -2px 0 #808080,inset 2px 2px 0 #d4d0c8;"><div style="left:4px;top:9px;width:6px;height:2px;background:#000"></div></div>
<div style="left:490px;top:7px;width:16px;height:14px;background:#d4d0c8;box-shadow:inset -1px -1px 0 #404040,inset 1px 1px 0 #fff,inset -2px -2px 0 #808080,inset 2px 2px 0 #d4d0c8;"><div style="left:3px;top:2px;width:9px;height:9px;border:1px solid #000;border-top-width:2px"></div></div>
<div style="left:508px;top:7px;width:16px;height:14px;background:#d4d0c8;box-shadow:inset -1px -1px 0 #404040,inset 1px 1px 0 #fff,inset -2px -2px 0 #808080,inset 2px 2px 0 #d4d0c8;"></div>
<svg style="left:512px;top:10px;" width="8" height="7" viewBox="0 0 8 7"><path d="M.5 0L7.5 7M7.5 0L.5 7" stroke="#000" stroke-width="1.5"/></svg>
<span class="t" style="left:9.5px;top:26px;font-size:11px;line-height:14px;color:#000;letter-spacing:-0.583px;"><u>F</u>ile</span>
<span class="t" style="left:38px;top:26px;font-size:11px;line-height:14px;color:#000;letter-spacing:-0.656px;"><u>E</u>dit</span>
<span class="t" style="left:68px;top:26px;font-size:11px;line-height:14px;color:#000;letter-spacing:-0.885px;"><u>V</u>iew</span>
<span class="t" style="left:101.5px;top:26px;font-size:11px;line-height:14px;color:#000;letter-spacing:-0.096px;">F<u>a</u>vorites</span>
<span class="t" style="left:158.5px;top:26px;font-size:11px;line-height:14px;color:#000;letter-spacing:-0.547px;"><u>H</u>elp</span>
<div style="left:4px;top:43px;width:146px;height:80px;background:#fff;box-shadow:inset 1px 1px 0 #808080,inset -1px -1px 0 #fff,inset 2px 2px 0 #404040,inset -2px -2px 0 #d4d0c8;"></div>
<div style="left:36px;top:60px;width:1px;height:40px;background:repeating-linear-gradient(#808080 0 1px,transparent 1px 2px);"></div>
<div style="left:41px;top:69px;width:6px;height:1px;background:repeating-linear-gradient(90deg,#808080 0 1px,transparent 1px 2px);"></div>
<div style="left:41px;top:85px;width:6px;height:1px;background:repeating-linear-gradient(90deg,#808080 0 1px,transparent 1px 2px);"></div>
<div style="left:13px;top:49px;width:9px;height:9px;background:#fff;border:1px solid #808080;"></div>
<div style="left:15px;top:53px;width:5px;height:1px;background:#000;"></div>
<div style="left:32px;top:65px;width:9px;height:9px;background:#fff;border:1px solid #808080;"></div>
<div style="left:34px;top:69px;width:5px;height:1px;background:#000;"></div>
<div style="left:36px;top:67px;width:1px;height:5px;background:#000;"></div>
<div style="left:32px;top:81px;width:9px;height:9px;background:#fff;border:1px solid #808080;"></div>
<div style="left:34px;top:85px;width:5px;height:1px;background:#000;"></div>
<svg style="left:29px;top:45px;" width="16" height="16" viewBox="0 0 16 16"><rect x="4" y="1" width="10" height="8" fill="#d4d0c8" stroke="#404040" stroke-width="1"/><rect x="6" y="3" width="6" height="4" fill="#0a8a8a"/><path d="M2 11 L14 11 L15 14 L1 14 Z" fill="#d4d0c8" stroke="#404040" stroke-width="1"/><rect x="3" y="9.5" width="11" height="1.5" fill="#808080"/></svg>
<span class="t" style="left:48.5px;top:46px;font-size:11px;line-height:14px;color:#000;letter-spacing:-0.253px;">My Computer</span>
<svg style="left:47px;top:62px;" width="17" height="14" viewBox="0 0 17 14"><path d="M.5 3 Q.5 .8 2.5 .5 L6 .5 L7.5 2.5 L13 2.5 Q14.5 2.5 14.5 4 L14.5 11.5 L.5 11.5 Z" fill="#ecec54" stroke="#74744c" stroke-width="1"/><path d="M1.5 3.5 H6.5 L7.5 4.5 H13.5" stroke="#ffffc8" stroke-width="1" fill="none"/><path d="M1 12.5 H15.5 V4.5" stroke="#303030" stroke-width="1" fill="none"/></svg>
<svg style="left:47px;top:78px;" width="17" height="14" viewBox="0 0 17 14"><path d="M.5 3 Q.5 .8 2.5 .5 L6 .5 L7.5 2.5 L13 2.5 Q14.5 2.5 14.5 4 L14.5 11.5 L.5 11.5 Z" fill="#ecec54" stroke="#74744c" stroke-width="1"/><path d="M1.5 3.5 H6.5 L7.5 4.5 H13.5" stroke="#ffffc8" stroke-width="1" fill="none"/><path d="M1 12.5 H15.5 V4.5" stroke="#303030" stroke-width="1" fill="none"/></svg>
<div style="left:67px;top:62px;width:66px;height:34px;overflow:hidden;">
<span class="t" style="left:0.5px;top:0px;font-size:11px;line-height:14px;color:#000;letter-spacing:-1.166px;">HKEY_CLASSES</span>
<span class="t" style="left:0.5px;top:16px;font-size:11px;line-height:14px;color:#000;letter-spacing:-1.064px;">HKEY_CURREN</span>
</div>
<div style="left:133px;top:45px;width:16px;height:76px;background:#eae8e4;"></div>
<div style="left:133px;top:45px;width:16px;height:16px;background:#d4d0c8;box-shadow:inset -1px -1px 0 #404040,inset 1px 1px 0 #fff,inset -2px -2px 0 #808080,inset 2px 2px 0 #d4d0c8;"></div>
<svg style="left:137px;top:51px;" width="8" height="4" viewBox="0 0 8 4"><path d="M0 4 H8 L4 0 Z" fill="#000"/></svg>
<div style="left:133px;top:61px;width:16px;height:60px;background:#d4d0c8;box-shadow:inset -1px -1px 0 #404040,inset 1px 1px 0 #fff,inset -2px -2px 0 #808080,inset 2px 2px 0 #d4d0c8;"></div>
<div style="left:155px;top:43px;width:371px;height:80px;background:#fff;box-shadow:inset 1px 1px 0 #808080,inset -1px -1px 0 #fff,inset 2px 2px 0 #404040,inset -2px -2px 0 #d4d0c8;"></div>
<div style="left:508px;top:45px;width:16px;height:76px;background-color:#fff;background-image:linear-gradient(45deg,#d4d0c8 25%,transparent 25%,transparent 75%,#d4d0c8 75%),linear-gradient(45deg,#d4d0c8 25%,transparent 25%,transparent 75%,#d4d0c8 75%);background-size:2px 2px;background-position:0 0,1px 1px;"></div>
<div style="left:508px;top:45px;width:16px;height:16px;background:#d4d0c8;box-shadow:inset -1px -1px 0 #404040,inset 1px 1px 0 #fff,inset -2px -2px 0 #808080,inset 2px 2px 0 #d4d0c8;"></div>
<svg style="left:512px;top:51px;" width="8" height="4" viewBox="0 0 8 4"><path d="M0 4 H8 L4 0 Z" fill="#000"/></svg>
<div style="left:157px;top:45px;width:119px;height:16px;background:#d4d0c8;box-shadow:inset -1px -1px 0 #404040,inset 1px 1px 0 #fff,inset -2px -2px 0 #808080;"></div>
<div style="left:276px;top:45px;width:92px;height:16px;background:#d4d0c8;box-shadow:inset -1px -1px 0 #404040,inset 1px 1px 0 #fff,inset -2px -2px 0 #808080;"></div>
<div style="left:368px;top:45px;width:135px;height:16px;background:#d4d0c8;box-shadow:inset -1px -1px 0 #404040,inset 1px 1px 0 #fff,inset -2px -2px 0 #808080;"></div>
<div style="left:503px;top:45px;width:5px;height:16px;background:#d4d0c8;box-shadow:inset -1px -1px 0 #404040,inset 1px 1px 0 #fff,inset -2px -2px 0 #808080;"></div>
<span class="t" style="left:162.5px;top:47px;font-size:11px;line-height:14px;color:#000;letter-spacing:-0.781px;">Name</span>
<span class="t" style="left:283px;top:47px;font-size:11px;line-height:14px;color:#000;letter-spacing:-0.286px;">Type</span>
<span class="t" style="left:375px;top:47px;font-size:11px;line-height:14px;color:#000;letter-spacing:-0.083px;">Data</span>
<svg style="left:161px;top:62px;" width="16" height="16" viewBox="0 0 16 16"><path d="M.5 .5 H12 L15.5 3.5 V15.5 L13 15.5 L12 14 Q9 13 6.5 14.2 Q4 15.2 .5 13.4 Z" fill="#fff"/><path d="M.5 13.4 V.5 H12" fill="none" stroke="#808080" stroke-width="1"/><path d="M12 .5 L12.4 3.2 L15.5 3.5 V15.5 L13 15.5 L12 14 Q9 13 6.5 14.2 Q4 15.2 .5 13.4" fill="none" stroke="#101010" stroke-width="1"/><g fill="none" stroke="#1010f0" stroke-width="1.5"><ellipse cx="4" cy="5" rx="1.6" ry="1.5"/><path d="M8.5 3 V7 M11.5 3 V7 M2.8 8.4 V12.4 M5.6 8.4 V12.4"/><ellipse cx="10.2" cy="10.4" rx="1.8" ry="1.5"/></g></svg>
<span class="t" style="left:178.5px;top:64px;font-size:11px;line-height:14px;color:#000;letter-spacing:-0.189px;">FontSmoothingOr…</span>
<span class="t" style="left:282px;top:64px;font-size:11px;line-height:14px;color:#000;letter-spacing:-0.967px;">REG_DWORD</span>
<span class="t" style="left:375px;top:64px;font-size:11px;line-height:14px;color:#000;letter-spacing:-0.005px;">0x00000001 (1)</span>
<svg style="left:161px;top:79px;" width="16" height="16" viewBox="0 0 16 16"><path d="M.5 .5 H12 L15.5 3.5 V15.5 L13 15.5 L12 14 Q9 13 6.5 14.2 Q4 15.2 .5 13.4 Z" fill="#fff"/><path d="M.5 13.4 V.5 H12" fill="none" stroke="#808080" stroke-width="1"/><path d="M12 .5 L12.4 3.2 L15.5 3.5 V15.5 L13 15.5 L12 14 Q9 13 6.5 14.2 Q4 15.2 .5 13.4" fill="none" stroke="#101010" stroke-width="1"/><g fill="none" stroke="#1010f0" stroke-width="1.5"><ellipse cx="4" cy="5" rx="1.6" ry="1.5"/><path d="M8.5 3 V7 M11.5 3 V7 M2.8 8.4 V12.4 M5.6 8.4 V12.4"/><ellipse cx="10.2" cy="10.4" rx="1.8" ry="1.5"/></g></svg>
<span class="t" style="left:178.5px;top:81px;font-size:11px;line-height:14px;color:#000;letter-spacing:-0.185px;">FontSmoothingType</span>
<span class="t" style="left:282px;top:81px;font-size:11px;line-height:14px;color:#000;letter-spacing:-0.967px;">REG_DWORD</span>
<span class="t" style="left:375px;top:81px;font-size:11px;line-height:14px;color:#000;letter-spacing:-0.005px;">0x00000001 (1)</span>
</div>
<div style="left:1264px;top:110px;width:16px;height:622px;background-color:#fcfcfd;background-image:linear-gradient(45deg,#d8dce1 25%,transparent 25%,transparent 75%,#d8dce1 75%),linear-gradient(45deg,#d8dce1 25%,transparent 25%,transparent 75%,#d8dce1 75%);background-size:2px 2px;background-position:0 0,1px 1px;"></div>
<div style="left:1264px;top:110px;width:16px;height:16px;background:linear-gradient(#f6f7f8,#d8dbe0);border:1px solid #b8bec6;border-radius:2px;"></div>
<svg style="left:1269px;top:116px;" width="7" height="4" viewBox="0 0 7 4"><path d="M0 4 H7 L3.5 0 Z" fill="#111"/></svg>
<div style="left:1264px;top:716px;width:16px;height:16px;background:linear-gradient(#f6f7f8,#d8dbe0);border:1px solid #b8bec6;border-radius:2px;"></div>
<svg style="left:1269px;top:722px;" width="7" height="4" viewBox="0 0 7 4"><path d="M0 0 H7 L3.5 4 Z" fill="#111"/></svg>
<div style="left:1264px;top:486px;width:16px;height:41px;background:linear-gradient(90deg,#f6f7f8,#d8dbe0);border:1px solid #b8bec6;border-radius:2px;"></div>
<svg style="left:1267px;top:501px;" width="9" height="9" viewBox="0 0 9 9"><rect x="1" y="1" width="1" height="1" fill="#8a929c"/><rect x="1" y="3" width="1" height="1" fill="#8a929c"/><rect x="1" y="5" width="1" height="1" fill="#8a929c"/><rect x="1" y="7" width="1" height="1" fill="#8a929c"/><rect x="3" y="1" width="1" height="1" fill="#8a929c"/><rect x="3" y="3" width="1" height="1" fill="#8a929c"/><rect x="3" y="5" width="1" height="1" fill="#8a929c"/><rect x="3" y="7" width="1" height="1" fill="#8a929c"/><rect x="5" y="1" width="1" height="1" fill="#8a929c"/><rect x="5" y="3" width="1" height="1" fill="#8a929c"/><rect x="5" y="5" width="1" height="1" fill="#8a929c"/><rect x="5" y="7" width="1" height="1" fill="#8a929c"/><rect x="7" y="1" width="1" height="1" fill="#8a929c"/><rect x="7" y="3" width="1" height="1" fill="#8a929c"/><rect x="7" y="5" width="1" height="1" fill="#8a929c"/><rect x="7" y="7" width="1" height="1" fill="#8a929c"/></svg>
<div style="left:36px;top:732px;width:1228px;height:17px;background-color:#fcfcfd;background-image:linear-gradient(45deg,#d8dce1 25%,transparent 25%,transparent 75%,#d8dce1 75%),linear-gradient(45deg,#d8dce1 25%,transparent 25%,transparent 75%,#d8dce1 75%);background-size:2px 2px;background-position:0 0,1px 1px;border-bottom:1px solid #8a94a0;"></div>
<svg style="left:42px;top:737px;" width="4" height="7" viewBox="0 0 4 7"><path d="M4 0 V7 L0 3.5 Z" fill="#8c8c8c"/></svg>
<div style="left:52px;top:732px;width:1172px;height:16px;background:linear-gradient(#eff1f3 0,#e3e6ea 50%,#d2d6dc 100%);border:1px solid #c8cdd3;border-top-color:#dfe2e6;border-radius:2px;"></div>
<svg style="left:633px;top:736px;" width="9" height="9" viewBox="0 0 9 9"><rect x="1" y="1" width="1" height="1" fill="#8a929c"/><rect x="1" y="3" width="1" height="1" fill="#8a929c"/><rect x="1" y="5" width="1" height="1" fill="#8a929c"/><rect x="1" y="7" width="1" height="1" fill="#8a929c"/><rect x="3" y="1" width="1" height="1" fill="#8a929c"/><rect x="3" y="3" width="1" height="1" fill="#8a929c"/><rect x="3" y="5" width="1" height="1" fill="#8a929c"/><rect x="3" y="7" width="1" height="1" fill="#8a929c"/><rect x="5" y="1" width="1" height="1" fill="#8a929c"/><rect x="5" y="3" width="1" height="1" fill="#8a929c"/><rect x="5" y="5" width="1" height="1" fill="#8a929c"/><rect x="5" y="7" width="1" height="1" fill="#8a929c"/><rect x="7" y="1" width="1" height="1" fill="#8a929c"/><rect x="7" y="3" width="1" height="1" fill="#8a929c"/><rect x="7" y="5" width="1" height="1" fill="#8a929c"/><rect x="7" y="7" width="1" height="1" fill="#8a929c"/></svg>
<div style="left:1249px;top:732px;width:15px;height:16px;background:linear-gradient(#f6f7f8,#d8dbe0);border:1px solid #b8bec6;border-radius:2px;"></div>
<svg style="left:1255px;top:737px;" width="4" height="7" viewBox="0 0 4 7"><path d="M0 0 V7 L4 3.5 Z" fill="#111"/></svg>
<div style="left:1264px;top:732px;width:16px;height:17px;background:#d4d0c8;"></div>
<svg style="left:1266px;top:735px;" width="14" height="14" viewBox="0 0 14 14"><path d="M2 14 L14 2 M6 14 L14 6 M10 14 L14 10" stroke="#808080" stroke-width="1.4"/><path d="M3.5 14 L14 3.5 M7.5 14 L14 7.5 M11.5 14 L14 11.5" stroke="#fff" stroke-width="1"/></svg>
<div style="left:0px;top:749px;width:1280px;height:22px;background:linear-gradient(#f2f3f5 0,#e6e8ec 25%,#d2d6dc 55%,#c4c9d0 80%,#c6cad1 100%);"></div>
<svg style="left:1141px;top:752px;" width="18" height="15" viewBox="0 0 18 15"><path d="M4.5 2 Q4.5 1 5.5 1 L10.5 1 L13 3.5 L13 13 Q13 14 12 14 L5.5 14 Q4.5 14 4.5 13 Z" fill="#545860"/><path d="M6.5 6H11M6.5 8H11M6.5 10H11" stroke="#9498a0" stroke-width="1" stroke-dasharray="2 .6"/><path d="M3.4 7.5 L1.2 5.7 V9.3 Z M14.2 7.5 L16.4 5.7 V9.3 Z" fill="#2c3036"/></svg>
<svg style="left:1166px;top:751px;" width="17" height="14" viewBox="0 0 17 14"><rect x=".5" y="2.5" width="16" height="11" rx="1.5" fill="#3c4046"/><path d="M1.5 3 L2.5 1 L6 1 L7 3 Z" fill="#3c4046"/><circle cx="5.8" cy="8" r="3.3" fill="#f0f1f3"/><circle cx="5.8" cy="8" r="1.7" fill="#3c4046"/><rect x="11" y="4.5" width="3.6" height="1.8" fill="#f0f1f3"/></svg>
<svg style="left:1188px;top:757px;" width="6" height="3.5" viewBox="0 0 6 3.5"><path d="M0 0 H6 L3 3.5 Z" fill="#111"/></svg>
<div style="left:1202px;top:751px;width:76px;height:18px;background:#fff;border:1px solid #b4bcc6;border-radius:3px;"></div>
<svg style="left:1207px;top:754px;" width="12" height="12" viewBox="0 0 12 12"><circle cx="4.5" cy="4.5" r="3.4" fill="none" stroke="#555" stroke-width="1.5"/><path d="M7 7 L11 11" stroke="#555" stroke-width="2.2" stroke-linecap="round"/></svg>
<span class="t" style="left:1223px;top:753px;font-size:11px;line-height:14px;color:#000;letter-spacing:-0.047px;">100%</span>
<div style="left:1261px;top:752px;width:16px;height:16px;background:linear-gradient(#eef0f2,#d4d8dc);border-left:1px solid #c8ccd0;border-radius:0 2px 2px 0;"></div>
<svg style="left:1266px;top:759px;" width="7" height="4" viewBox="0 0 7 4"><path d="M0 0 H7 L3.5 4 Z" fill="#111"/></svg>
<div style="left:0px;top:770px;width:1280px;height:30px;background:#d4d0c8;box-shadow:inset 0 1px 0 #d4d0c8,inset 0 2px 0 #fff;"></div>
<div style="left:2px;top:774px;width:51px;height:22px;background:#d4d0c8;box-shadow:inset -1px -1px 0 #404040,inset 1px 1px 0 #fff,inset -2px -2px 0 #808080,inset 2px 2px 0 #d4d0c8;"></div>
<svg style="left:4px;top:776px;" width="17" height="18" viewBox="0 0 17 18"><path d="M3 3.2 Q6 .8 9 3 L7.6 8.6 Q4.6 6.4 1.6 8.8 Z" fill="#e8501c"/><path d="M10 3.6 Q13 5.8 16.2 3.2 L14.8 8.8 Q11.6 11.2 8.6 9 Z" fill="#5cb82c"/><path d="M1.4 9.8 Q4.4 7.4 7.4 9.6 L6 15.2 Q3 13 0 15.4 Z" fill="#2c64d8"/><path d="M8.4 10 Q11.4 12.2 14.6 9.8 L13.2 15.4 Q10 17.8 7 15.6 Z" fill="#f4c020"/></svg>
<span class="t" style="left:22px;top:778px;font-size:11px;line-height:14px;font-weight:bold;color:#000;letter-spacing:0.542px;">Пуск</span>
<svg style="left:61px;top:778px;" width="16" height="16" viewBox="0 0 16 16"><path d="M2.5 2 L6 14 M13.5 2 L10 14" stroke="#6c88b8" stroke-width="1.2" fill="none"/><path d="M4 3 L6.5 13" stroke="#e04818" stroke-width="1.6"/><path d="M6 2 L7.5 13" stroke="#f0a020" stroke-width="1.3"/><path d="M8.5 2.5 L8 13" stroke="#48a838" stroke-width="1.3"/><path d="M11.5 2 L9 13" stroke="#e03828" stroke-width="1.6"/><path d="M12.8 3 L10 12" stroke="#3868d0" stroke-width="1.2"/><path d="M5.8 13.2 Q8 15.8 10.2 13.2 Z" fill="#5870a0"/><circle cx="3.6" cy="1.6" r="1.5" fill="#e05020"/></svg>
<svg style="left:84px;top:778px;" width="16" height="16" viewBox="0 0 16 16"><circle cx="8" cy="8" r="7.4" fill="#ecc020" stroke="#7c5c08" stroke-width="1.2"/><path d="M8 8 L2 3 A7.4 7.4 0 0 1 10 .8 Z" fill="#fff0a0" opacity=".8"/><path d="M8 8 L14 13 A7.4 7.4 0 0 1 6 15.2 Z" fill="#fff0a0" opacity=".6"/><circle cx="8" cy="8" r="2.2" fill="#fff" stroke="#8c6c10" stroke-width=".8"/></svg>
<svg style="left:107px;top:778px;" width="16" height="16" viewBox="0 0 16 16"><circle cx="8" cy="8" r="7.9" fill="#202024"/><circle cx="8" cy="8" r="5.4" fill="#f8a010"/><path d="M4.6 11.5 L8 4 L11.4 11.5 L9.6 11.5 L8 7.6 L6.4 11.5 Z" fill="#28282c"/></svg>
<svg style="left:130px;top:778px;" width="16" height="16" viewBox="0 0 16 16"><circle cx="8" cy="8" r="7.4" fill="#e8e8ec" stroke="#8c8c94" stroke-width="1"/><circle cx="8" cy="8" r="5.2" fill="#d81818"/><path d="M5 11 Q4.5 8 7 6.5 Q7 8.5 8 8.5 Q8.5 6 10 5.5 Q9.8 7.5 11 9 Q11.5 10.5 10.5 11.5 Q8 9.5 5 11 Z" fill="#fff"/></svg>
<svg style="left:153px;top:778px;" width="16" height="16" viewBox="0 0 16 16"><rect x="5.5" y="3" width="5" height="12" rx="1" fill="#48b838" stroke="#4c5c4c" stroke-width="1"/><rect x="7" y=".5" width="2" height="3" fill="#787c78"/><rect x="6.8" y="5" width="2.4" height="3.2" fill="#d8f4c8"/><rect x="6.8" y="10" width="2.4" height="3" fill="#d8f4c8"/><rect x="1.5" y="8.5" width="3" height="5" fill="#c4c8c4" stroke="#787c78" stroke-width=".8"/><rect x="11.5" y="8.5" width="3" height="5" fill="#c4c8c4" stroke="#787c78" stroke-width=".8"/></svg>
<svg style="left:176px;top:778px;" width="16" height="16" viewBox="0 0 16 16"><ellipse cx="4.4" cy="11" rx="4.2" ry="2.4" fill="#606060" opacity=".5"/><path fill-rule="evenodd" fill="#cc1812" d="M4 7.8 A5.6 6.8 0 1 0 15.2 7.8 A5.6 6.8 0 1 0 4 7.8 Z M7.6 7.8 A2 5 0 1 1 11.6 7.8 A2 5 0 1 1 7.6 7.8 Z"/><path d="M5.8 4.4 Q4.8 7.6 6 10.8" stroke="#ff9888" stroke-width=".9" fill="none" opacity=".8"/></svg>
<svg style="left:199px;top:778px;" width="16" height="16" viewBox="0 0 16 16"><path d="M3 2 L5 2 L7 10 L4.5 11 Z" fill="#5c7c5c"/><path d="M4 11 L13 9.5 L14.5 13 L5 14.5 Z" fill="#9ca0a4" stroke="#6c7074" stroke-width=".6"/><path d="M5 6 L7 5.5 L7.5 9 L5.5 9.5 Z" fill="#50c040"/></svg>
<svg style="left:222px;top:778px;" width="16" height="16" viewBox="0 0 16 16"><path d="M.5 .5 H13.5 L15.5 2.5 V15.5 H.5 Z" fill="#1838c8" stroke="#0c1c78" stroke-width="1"/><rect x="3.5" y="1" width="8" height="5" fill="#e4e8f4"/><rect x="8.5" y="1.8" width="2" height="3.4" fill="#1838c8"/><rect x="2.5" y="8.5" width="11" height="6.5" fill="#fff"/><path d="M3 10.5H13M3 12.5H13" stroke="#d83838" stroke-width="1"/></svg>
<div style="left:256px;top:774px;width:158px;height:22px;background:#d4d0c8;box-shadow:inset -1px -1px 0 #404040,inset 1px 1px 0 #fff,inset -2px -2px 0 #808080,inset 2px 2px 0 #d4d0c8;"></div>
<svg style="left:260px;top:777px;" width="16" height="16" viewBox="0 0 16 16"><circle cx="8" cy="8" r="7.5" fill="#3890e0"/><circle cx="8" cy="8" r="7.5" fill="none" stroke="#78c0f0" stroke-width="1"/><path d="M3 5 Q8 2.5 13 5" stroke="#c8e8ff" stroke-width="1.2" fill="none"/><text x="2.6" y="11.5" font-family="Liberation Sans" font-size="8" font-weight="bold" font-style="italic" fill="#40e040">T</text><text x="7" y="12.5" font-family="Liberation Sans" font-size="8" font-weight="bold" font-style="italic" fill="#e8f8ff">c</text></svg>
<span class="t" style="left:280px;top:778px;font-size:11px;line-height:14px;color:#000;letter-spacing:-0.157px;">Total Commander 7.04a …</span>
<div style="left:418px;top:774px;width:159px;height:22px;background:#d4d0c8;box-shadow:inset -1px -1px 0 #404040,inset 1px 1px 0 #fff,inset -2px -2px 0 #808080,inset 2px 2px 0 #d4d0c8;"></div>
<svg style="left:422px;top:777px;" width="16" height="16" viewBox="0 0 16 16"><path d="M4.5 1.5 H12 L15.5 5 V15.5 H4.5 Z" fill="#fff" stroke="#6c8cc8" stroke-width="1"/><path d="M6 9H14M6 11H14M6 13H14" stroke="#a8c0e8" stroke-width="1"/><rect x=".5" y="2.5" width="10" height="8" fill="#2a4cb0" stroke="#10287c" stroke-width="1"/><path d="M2.2 4.3 L3.6 8.7 L5.2 5.2 L6.8 8.7 L8.6 4.3" fill="none" stroke="#fff" stroke-width="1.3"/></svg>
<span class="t" style="left:441px;top:778px;font-size:11px;line-height:14px;color:#000;letter-spacing:-0.169px;">SKR3.doc - Microsoft Word</span>
<div style="left:580px;top:774px;width:158px;height:22px;background-color:#fff;background-image:linear-gradient(45deg,#d4d0c8 25%,transparent 25%,transparent 75%,#d4d0c8 75%),linear-gradient(45deg,#d4d0c8 25%,transparent 25%,transparent 75%,#d4d0c8 75%);background-size:2px 2px;background-position:0 0,1px 1px;box-shadow:inset 1px 1px 0 #404040,inset -1px -1px 0 #fff,inset 2px 2px 0 #808080,inset -2px -2px 0 #d4d0c8;"></div>
<svg style="left:585px;top:778px;" width="16" height="16" viewBox="0 0 16 16"><ellipse cx="4.4" cy="11" rx="4.2" ry="2.4" fill="#606060" opacity=".5"/><path fill-rule="evenodd" fill="#cc1812" d="M4 7.8 A5.6 6.8 0 1 0 15.2 7.8 A5.6 6.8 0 1 0 4 7.8 Z M7.6 7.8 A2 5 0 1 1 11.6 7.8 A2 5 0 1 1 7.6 7.8 Z"/><path d="M5.8 4.4 Q4.8 7.6 6 10.8" stroke="#ff9888" stroke-width=".9" fill="none" opacity=".8"/></svg>
<span class="t" style="left:604px;top:779px;font-size:11px;line-height:14px;font-weight:bold;color:#000;letter-spacing:0.204px;">Ваш собственный се...</span>
<div style="left:742px;top:774px;width:159px;height:22px;background:#d4d0c8;box-shadow:inset -1px -1px 0 #404040,inset 1px 1px 0 #fff,inset -2px -2px 0 #808080,inset 2px 2px 0 #d4d0c8;"></div>
<svg style="left:746px;top:777px;" width="16" height="16" viewBox="0 0 16 16"><path d="M4.5 1.5 H12 L15.5 5 V15.5 H4.5 Z" fill="#fff" stroke="#6c8cc8" stroke-width="1"/><path d="M6 9H14M6 11H14M6 13H14" stroke="#a8c0e8" stroke-width="1"/><rect x=".5" y="2.5" width="10" height="8" fill="#2a4cb0" stroke="#10287c" stroke-width="1"/><path d="M2.2 4.3 L3.6 8.7 L5.2 5.2 L6.8 8.7 L8.6 4.3" fill="none" stroke="#fff" stroke-width="1.3"/></svg>
<span class="t" style="left:766px;top:778px;font-size:11px;line-height:14px;color:#000;letter-spacing:-0.017px;">Документ2 - Microsoft …</span>
<div style="left:905px;top:774px;width:159px;height:22px;background:#d4d0c8;box-shadow:inset -1px -1px 0 #404040,inset 1px 1px 0 #fff,inset -2px -2px 0 #808080,inset 2px 2px 0 #d4d0c8;"></div>
<svg style="left:909px;top:777px;" width="16" height="16" viewBox="0 0 16 16"><path d="M4.5 1.5 H12 L15.5 5 V15.5 H4.5 Z" fill="#fff" stroke="#6c8cc8" stroke-width="1"/><path d="M6 9H14M6 11H14M6 13H14" stroke="#a8c0e8" stroke-width="1"/><rect x=".5" y="2.5" width="10" height="8" fill="#2a4cb0" stroke="#10287c" stroke-width="1"/><path d="M2.2 4.3 L3.6 8.7 L5.2 5.2 L6.8 8.7 L8.6 4.3" fill="none" stroke="#fff" stroke-width="1.3"/></svg>
<span class="t" style="left:929px;top:778px;font-size:11px;line-height:14px;color:#000;letter-spacing:0.028px;">Документ5 - Microsoft …</span>
<div style="left:1075px;top:778px;width:17px;height:16px;background:#0a246a;"></div>
<span class="t" style="left:1077px;top:779px;font-size:10px;line-height:13px;color:#fff;letter-spacing:0.094px;">EN</span>
<div style="left:1097px;top:775px;width:2px;height:22px;border-left:1px solid #808080;border-right:1px solid #fff;"></div>
<span class="t" style="left:1104px;top:777px;font-size:13px;line-height:16px;color:#000;">(</span>
<div style="left:1111px;top:774px;width:167px;height:22px;box-shadow:inset 1px 1px 0 #808080,inset -1px -1px 0 #fff;"></div>
<svg style="left:1116px;top:781px;" width="8" height="7" viewBox="0 0 8 7"><path d="M3.4 .5 L.9 3.5 L3.4 6.5 M7.4 .5 L4.9 3.5 L7.4 6.5" fill="none" stroke="#000" stroke-width="1.5"/></svg>
<svg style="left:1128px;top:777px;" width="16" height="16" viewBox="0 0 16 16"><rect x="5" y="1" width="10" height="8" fill="#30387c" stroke="#1c2050" stroke-width="1"/><rect x="6.5" y="2.5" width="7" height="4.5" fill="#5868c0"/><rect x="1" y="5" width="10" height="8" fill="#383f88" stroke="#1c2050" stroke-width="1"/><rect x="2.5" y="6.5" width="7" height="4.5" fill="#6c7cd0"/><rect x="3" y="13.5" width="6" height="1.5" fill="#9098a0"/></svg>
<svg style="left:1146px;top:777px;" width="16" height="16" viewBox="0 0 16 16"><path d="M2 9 L11 6.5 L15 10 L6 13 Z" fill="#c8ccd0" stroke="#585c60" stroke-width=".8"/><path d="M6 13 L15 10 V12.5 L6 15.5 Z" fill="#888c90"/><path d="M2 9 L6 13 V15.5 L2 11.5 Z" fill="#a8acb0"/><path d="M4 1 L9 1 L9 4 L11.5 4 L6.5 9 L1.5 4 L4 4 Z" fill="#28b028" stroke="#0c5c0c" stroke-width=".7" transform="rotate(-20 6.5 5)"/></svg>
<svg style="left:1164px;top:777px;" width="16" height="16" viewBox="0 0 16 16"><path d="M2 8 L5 6 L8 8 L8 12 L12 14 L9 15.5 L5 13 L2 15 L3.5 11.5 Z" fill="#dce0e4" stroke="#8c9094" stroke-width=".8"/><circle cx="10" cy="6" r="5.2" fill="#38b838" stroke="#187818" stroke-width=".8"/><path d="M7.3 6 L9.3 8.2 L12.8 3.8" fill="none" stroke="#fff" stroke-width="1.6"/></svg>
<div style="left:1183px;top:778px;width:16px;height:16px;background:#860808;"></div>
<span class="t" style="left:1185px;top:779px;font-size:11px;line-height:14px;color:#fff;letter-spacing:-0.469px;">En</span>
<svg style="left:1201px;top:777px;" width="16" height="16" viewBox="0 0 16 16"><defs><radialGradient id="ag" cx=".35" cy=".3" r=".8"><stop offset="0" stop-color="#5a8cd0"/><stop offset=".6" stop-color="#204c98"/><stop offset="1" stop-color="#14336c"/></radialGradient></defs><circle cx="8" cy="8" r="7.8" fill="url(#ag)"/><text x="4.6" y="12.6" font-family="Liberation Sans" font-size="13" font-weight="bold" fill="#fff">a</text></svg>
<svg style="left:1218px;top:777px;" width="18" height="16" viewBox="0 0 18 16"><path d="M1 15 L1 9 Q1 6 4 6 L6 6" fill="none" stroke="#606468" stroke-width="2"/><rect x="5.5" y="1.5" width="7" height="12" rx="2.5" fill="#f09020" stroke="#704008" stroke-width="1"/><rect x="7" y="3" width="2.2" height="9" fill="#fce0a8"/><rect x="12.5" y="4" width="4.5" height="2" fill="#404448"/><rect x="12.5" y="9" width="4.5" height="2" fill="#404448"/></svg>
<span class="t" style="left:1242px;top:779px;font-size:11px;line-height:14px;color:#000;letter-spacing:0.117px;">20:28</span>
</body></html>
